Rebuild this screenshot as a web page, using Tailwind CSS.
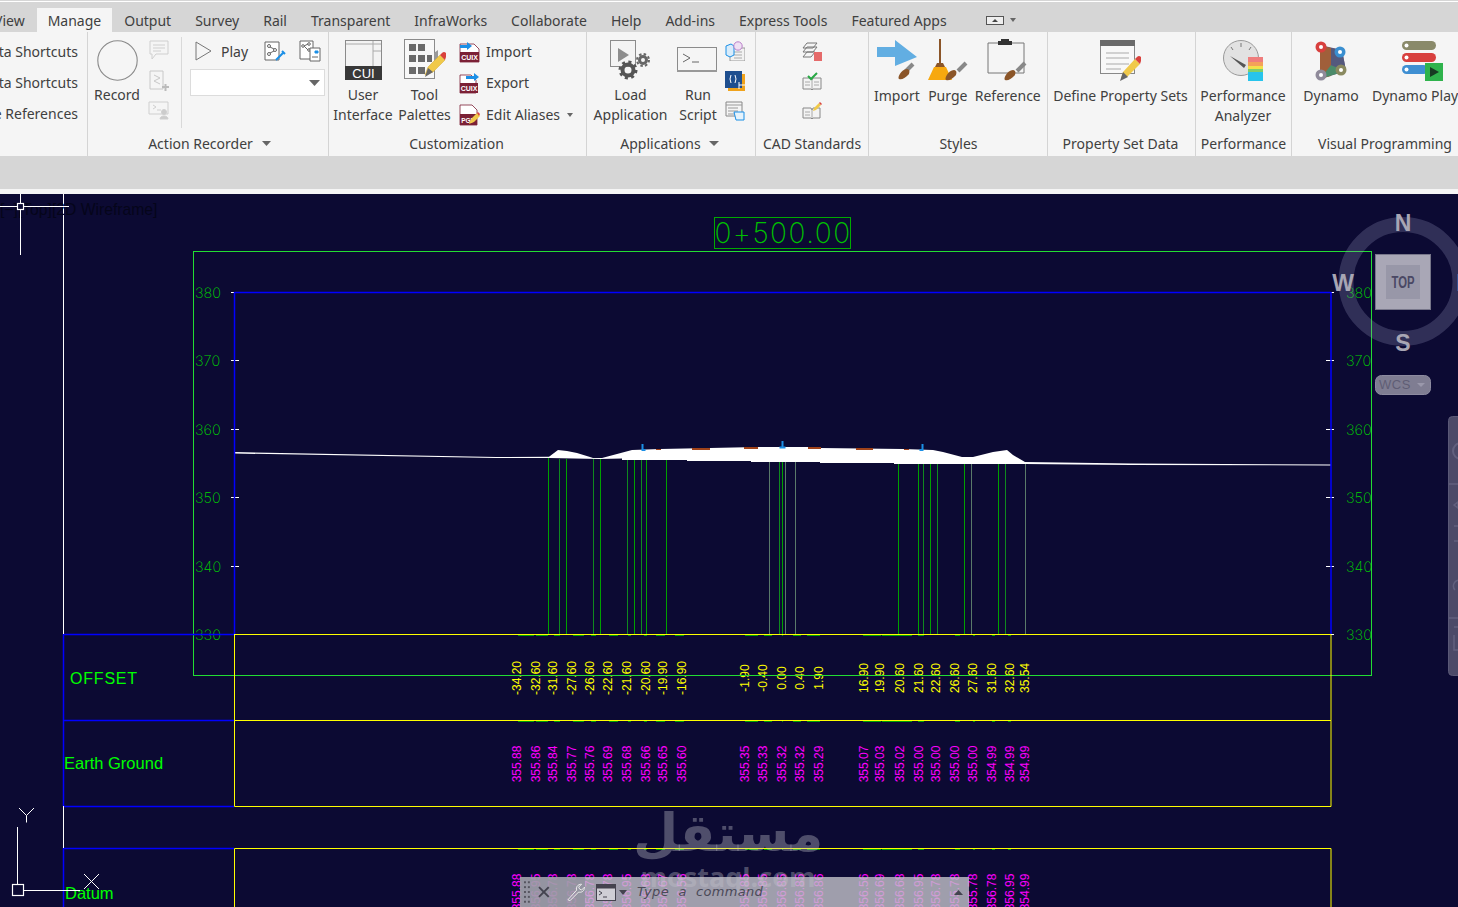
<!DOCTYPE html>
<html lang="en">
<head>
  <meta charset="UTF-8" />
  <title>Civil 3D - Cross Section</title>
  <script src="https://cdn.jsdelivr.net/npm/@tailwindcss/browser@4"></script>
</head>
<body class="relative w-[1458px] h-[907px] overflow-hidden bg-[#d6d6d6] text-[#404040] text-[14px] font-['Noto_Sans',sans-serif]">
  <div class="h-[1px] bg-[#d6d6d6]"></div>
  <div class="h-[1px] bg-white"></div>

  <!-- tabs -->
  <div class="h-[30px] flex items-end -ml-[18px] whitespace-nowrap">
    <div class="h-[24px] px-3 flex items-center">View</div>
    <div class="h-[24px] px-[11px] flex items-center bg-[#f5f5f5]">Manage</div>
    <div class="h-[24px] px-3 flex items-center">Output</div>
    <div class="h-[24px] px-3 flex items-center">Survey</div>
    <div class="h-[24px] px-3 flex items-center">Rail</div>
    <div class="h-[24px] px-3 flex items-center">Transparent</div>
    <div class="h-[24px] px-3 flex items-center">InfraWorks</div>
    <div class="h-[24px] px-3 flex items-center">Collaborate</div>
    <div class="h-[24px] px-3 flex items-center">Help</div>
    <div class="h-[24px] px-3 flex items-center">Add-ins</div>
    <div class="h-[24px] px-3 flex items-center">Express Tools</div>
    <div class="h-[24px] px-3 flex items-center">Featured Apps</div>
    <div class="h-[24px] ml-[27px] flex items-center gap-[6px]">
      <svg width="18" height="9" viewBox="0 0 18 9"><rect x=".5" y=".5" width="17" height="8" fill="#eee" stroke="#555"/><path d="M6 6h6L9 3z" fill="#444"/></svg>
      <svg width="6" height="4" viewBox="0 0 6 4"><path d="M0 0h6L3 4z" fill="#666"/></svg>
    </div>
  </div>

  <!-- ribbon -->
  <div class="h-[124px] flex bg-[#f5f5f5] whitespace-nowrap overflow-hidden">
    <!-- shortcuts -->
    <section class="w-[88px] shrink-0 flex flex-col border-r border-[#d4d4d4] pr-[9px] items-end">
      <div class="flex-1 pt-[4px] flex flex-col items-end leading-[31px]">
        <div>ta Shortcuts</div>
        <div>ta Shortcuts</div>
        <div>e References</div>
      </div>
    </section>

    <!-- action recorder -->
    <section class="w-[241px] shrink-0 flex flex-col border-r border-[#d4d4d4]">
      <div class="flex-1 flex">
        <div class="w-[58px] flex flex-col items-center">
          <div class="h-[52px] flex items-end pb-[3px]"><svg width="41" height="41" viewBox="0 0 41 41"><circle cx="20.5" cy="20.5" r="19.7" fill="#f5f5f5" stroke="#8a8a8a" stroke-width="1.1"/></svg></div>
          <div class="leading-[20px] pt-[1px]">Record</div>
        </div>
        <div class="w-[26px] mr-[9px] pt-[7px] flex flex-col items-center gap-[9px]">
          <svg width="22" height="22" viewBox="0 0 22 22" fill="none" stroke="#cfcfcf"><path d="M2 2h18v13H8l-4 5v-5H2z"/><path d="M5 6h12M5 9h12M5 12h8"/></svg>
          <svg width="22" height="22" viewBox="0 0 22 22" fill="none" stroke="#c8c8c8"><path d="M2 1h13v18H2z"/><path d="M6 5l6 3-6 3 6 3" /><path d="M14 17h7M17.5 14v7" stroke="#bbb" stroke-width="2"/></svg>
          <svg width="22" height="20" viewBox="0 0 22 20" fill="none" stroke="#cfcfcf"><path d="M1 1h19v12H1z"/><path d="M5 4l3 2-3 2M9 9h4"/><circle cx="16" cy="11" r="2.5" fill="#ccc"/><path d="M12 18c0-4 8-4 8 0z" fill="#ccc"/></svg>
        </div>
        <div class="w-[1px] h-[91px] mt-[5px] bg-[#d9d9d9]"></div>
        <div class="pl-[8px] pt-[6px] w-[146px]">
          <div class="h-[26px] flex items-center">
            <svg class="ml-[5px]" width="17" height="20" viewBox="0 0 17 20"><path d="M1 1l15 9-15 9z" fill="none" stroke="#777"/></svg>
            <span class="ml-[9px] w-[43px]">Play</span>
            <svg width="22" height="22" viewBox="0 0 22 22" fill="none" stroke="#666"><path d="M1 2h14v18H1z" fill="#fff"/><circle cx="5" cy="6" r="1.5"/><circle cx="11" cy="10" r="1.5"/><circle cx="5" cy="14" r="1.5"/><path d="M6 7l4 2M10 11l-4 2"/><path d="M12 20l7-7M18 11l3 3" stroke="#1b8fe6" stroke-width="2"/></svg>
            <svg class="ml-[13px]" width="22" height="22" viewBox="0 0 22 22" fill="none" stroke="#666"><path d="M1 1h13v18H1z" fill="#fff"/><circle cx="4" cy="6" r="1.3"/><circle cx="10" cy="4" r="1.3"/><circle cx="10" cy="10" r="1.3"/><path d="M5 6l4-2M5 6l4 4"/><path d="M11 8h10v13H11z" fill="#fff"/><path d="M16 11h3v2h-3z" fill="#1b8fe6" stroke="#1b8fe6"/><path d="M13 17h6"/></svg>
          </div>
          <div class="mt-[5px] w-[135px] h-[27px] bg-white border border-[#dcdcdc] flex items-center justify-end pr-[4px]">
            <svg width="11" height="6" viewBox="0 0 11 6"><path d="M0 0h11L5.5 6z" fill="#666"/></svg>
          </div>
        </div>
      </div>
      <div class="h-[22px] mb-[2px] flex items-center justify-center gap-[9px] pl-[5px] pr-[2px]">Action Recorder <svg width="9" height="5" viewBox="0 0 9 5"><path d="M0 0h9L4.500 5z" fill="#666"/></svg></div>
    </section>

    <!-- customization -->
    <section class="w-[258px] shrink-0 flex flex-col border-r border-[#d4d4d4]">
      <div class="flex-1 flex">
        <div class="w-[70px] flex flex-col items-center -ml-[1px]">
          <div class="h-[52px] flex items-end pb-[4px]">
            <svg width="37" height="40" viewBox="0 0 37 40"><rect x=".5" y=".5" width="36" height="39" fill="#f3f3f3" stroke="#8b8b8b"/><path d="M1 4h35M28 1v26M28 11h8" stroke="#aaa" fill="none"/><rect y="26" width="37" height="14" fill="#383838"/><text x="18.500" y="37.500" text-anchor="middle" fill="#fff" font-size="13" font-family="Liberation Sans">CUI</text></svg>
          </div>
          <div class="leading-[20px] pt-[1px] text-center">User<br>Interface</div>
        </div>
        <div class="w-[59px] flex flex-col items-center -ml-[3px]">
          <div class="h-[52px] flex items-end pb-[3px]">
            <svg width="42" height="42" viewBox="0 0 42 42"><rect x=".5" y=".5" width="30" height="39" fill="#f8f8f8" stroke="#8b8b8b"/><g fill="#6a6a6a"><rect x="5" y="5" width="7" height="7"/><rect x="14" y="5" width="7" height="7"/><rect x="5" y="16" width="7" height="7"/><rect x="14" y="16" width="7" height="7"/><rect x="23" y="16" width="5" height="7"/><rect x="5" y="28" width="7" height="7"/><rect x="14" y="28" width="7" height="7"/></g><path d="M30 14l4-3v10l-4 4z" fill="#999"/><path d="M21 36l3-8 12-12 5 5-12 12z" fill="#f0c94a" stroke="#d5a92e" stroke-width=".5"/><path d="M36 16l2-2a2.500 2.500 0 0 1 4 4l-1 3z" fill="#d9413c"/><path d="M21 38l3-9 5 4z" fill="#666"/></svg>
          </div>
          <div class="leading-[20px] pt-[1px] text-center">Tool<br>Palettes</div>
        </div>
        <div class="flex flex-col pl-[5px] pt-[4px] leading-[31px]">
          <div class="flex items-center gap-[6px]">
            <svg width="21" height="22" viewBox="0 0 21 22"><path d="M1 3h14l5 5v13H1z" fill="#fff" stroke="#7b2035" stroke-width=".8"/><rect x="1" y="11" width="19" height="10" fill="#7b2035"/><text x="10.500" y="19" text-anchor="middle" fill="#fff" font-size="7" font-weight="700" font-family="Liberation Sans">CUIX</text><path d="M1 4h7V1l5 4-5 4V7H1z" fill="#1b8fe6"/></svg>
            Import
          </div>
          <div class="flex items-center gap-[6px]">
            <svg width="21" height="22" viewBox="0 0 21 22"><path d="M1 3h11l5 5v13H1z" fill="#fff" stroke="#7b2035" stroke-width=".8"/><rect x="1" y="11" width="18" height="10" fill="#7b2035"/><text x="10" y="19" text-anchor="middle" fill="#fff" font-size="7" font-weight="700" font-family="Liberation Sans">CUIX</text><path d="M7 4h8V1l5 4-5 4V7H7z" fill="#1b8fe6"/></svg>
            Export
          </div>
          <div class="flex items-center gap-[6px] pt-[1px]">
            <svg width="21" height="22" viewBox="0 0 21 22"><path d="M1 1h12l5 5v15H1z" fill="#fff" stroke="#7b2035" stroke-width=".8"/><rect x="1" y="10" width="17" height="11" fill="#7b2035"/><text x="9" y="18.500" text-anchor="middle" fill="#fff" font-size="6.500" font-weight="700" font-family="Liberation Sans">PGP</text><path d="M10 20l2-5 6-6 3 3-6 6z" fill="#f0c94a"/><path d="M18 9l1-1 2 2-1 2z" fill="#d9413c"/></svg>
            Edit Aliases
            <svg class="ml-[1px]" width="6" height="4" viewBox="0 0 6 4"><path d="M0 0h6L3 4z" fill="#666"/></svg>
          </div>
        </div>
      </div>
      <div class="h-[22px] mb-[2px] flex items-center justify-center pr-[2px]">Customization</div>
    </section>

    <!-- applications -->
    <section class="w-[169px] shrink-0 flex flex-col border-r border-[#d4d4d4]">
      <div class="flex-1 flex">
        <div class="w-[87px] flex flex-col items-center">
          <div class="h-[52px] flex items-end pb-[4px]">
            <svg width="42" height="40" viewBox="0 0 42 40"><rect x=".5" y=".5" width="25" height="26" fill="#f3f3f3" stroke="#8b8b8b"/><path d="M8 8l11 7-11 7z" fill="#8c8c8c"/><circle cx="18" cy="30" r="5.500" fill="none" stroke="#555" stroke-width="4"/><circle cx="18" cy="30" r="8" fill="none" stroke="#555" stroke-width="3" stroke-dasharray="3 3.300"/><circle cx="33" cy="20" r="3.500" fill="none" stroke="#666" stroke-width="3"/><circle cx="33" cy="20" r="6" fill="none" stroke="#666" stroke-width="2" stroke-dasharray="2.500 2.200"/></svg>
          </div>
          <div class="leading-[20px] pt-[1px] text-center">Load<br>Application</div>
        </div>
        <div class="w-[48px] flex flex-col items-center">
          <div class="h-[52px] flex items-end pb-[11px] -ml-[2px]">
            <svg width="40" height="26" viewBox="0 0 40 26"><rect x=".5" y=".5" width="39" height="24" fill="#f5f5f5" stroke="#8b8b8b"/><rect y="23" width="40" height="2" fill="#999"/><path d="M6 7l7 4-7 4M15 15h7" fill="none" stroke="#666"/></svg>
          </div>
          <div class="leading-[20px] pt-[1px] text-center">Run<br>Script</div>
        </div>
        <div class="pl-[3px] pt-[9px] flex flex-col gap-[10px]">
          <svg width="20" height="20" viewBox="0 0 20 20"><path d="M5 7h15v13H5z" fill="#f2f2f2" stroke="#999"/><path d="M9 11h8M9 14h8M9 17h8" stroke="#aaa"/><path d="M1 5l5-2 3 2v9l-4 2-4-2z" fill="#d8ecfb" stroke="#1b8fe6"/><circle cx="13" cy="5" r="4.200" fill="#efe0f3" stroke="#b97fc9"/></svg>
          <svg width="20" height="20" viewBox="0 0 20 20"><rect x="3" y="3" width="17" height="17" fill="#f0a31c"/><rect width="17" height="17" fill="#1f4f8f"/><path d="M6 4q-2 4 0 8M10 4q2 4 0 8" fill="none" stroke="#fff"/><path d="M14 14h6M14 11v7" stroke="#fff"/></svg>
          <svg width="20" height="20" viewBox="0 0 20 20"><path d="M1 1h16v14H1z" fill="#f5f5f5" stroke="#888"/><path d="M1 4h16M3 7h10M3 10h10M3 13h6" stroke="#999"/><path d="M9 11h10v8H11z" fill="#e6f3fc" stroke="#1b8fe6"/></svg>
        </div>
      </div>
      <div class="h-[22px] mb-[2px] flex items-center justify-center gap-[8px] pr-[3px]">Applications <svg width="10" height="5" viewBox="0 0 10 5"><path d="M0 0h10L5 5z" fill="#666"/></svg></div>
    </section>

    <!-- cad standards -->
    <section class="w-[113px] shrink-0 flex flex-col border-r border-[#d4d4d4]">
      <div class="flex-1 flex flex-col items-center pt-[10px] gap-[10px] pr-[1px]">
        <svg width="20" height="20" viewBox="0 0 20 20" fill="none" stroke="#777"><path d="M5 1h10l-4 5H1zM5 5h10l-4 5H1zM5 10h8l-4 5H1z" fill="#f5f5f5"/><rect x="12" y="10" width="8" height="9" fill="#e56a6a" stroke="none"/></svg>
        <svg width="20" height="19" viewBox="0 0 20 19"><path d="M1 6h8l1 2 1-2h8v11h-8l-1 1-1-1H1z" fill="#f3f3f3" stroke="#888"/><path d="M10 8v9M3 10h5M3 13h5M12 10h5M12 13h5" stroke="#aaa"/><path d="M6 4l3 3 6-6" fill="none" stroke="#27a844" stroke-width="2"/></svg>
        <svg width="20" height="20" viewBox="0 0 20 20"><path d="M1 7h8l1 2 1-2h7v10h-7l-1 1-1-1H1z" fill="#f3f3f3" stroke="#888"/><path d="M10 9v8M3 11h5M3 14h5" stroke="#aaa"/><path d="M11 10l1-3 5-5 2 2-5 5z" fill="#f0c94a"/><path d="M17 2l1-1 2 2-1 1z" fill="#d9413c"/></svg>
      </div>
      <div class="h-[22px] mb-[2px] flex items-center justify-center">CAD Standards</div>
    </section>

    <!-- styles -->
    <section class="w-[179px] shrink-0 flex flex-col border-r border-[#d4d4d4]">
      <div class="flex-1 flex pl-[5px] gap-[8px]">
        <div class="flex flex-col items-center">
          <div class="h-[52px] flex items-end pb-[3px]">
            <svg width="42" height="42" viewBox="0 0 42 42"><path d="M1 8h18V1l22 17-22 9v-9H1z" fill="#62aee2"/><path d="M37 25l-8 8" stroke="#888" stroke-width="4"/><path d="M23 40c-2-1 2-10 8-10 3 0 3 4 1 6-3 3-6 5-9 4z" fill="#8b5528"/></svg>
          </div>
          <div class="leading-[20px] pt-[2px]">Import</div>
        </div>
        <div class="flex flex-col items-center">
          <div class="h-[52px] flex items-end pb-[3px]">
            <svg width="40" height="42" viewBox="0 0 40 42"><path d="M11 0h2v24h-2z" fill="#8b5528"/><path d="M9 24h6l3 6H6z" fill="#8b5528"/><path d="M6 28h12l6 13H0z" fill="#f7a80f"/><path d="M38 24l-8 8" stroke="#888" stroke-width="4"/><path d="M18 41c-2-1 2-10 8-10 3 0 3 4 1 6-3 3-6 5-9 4z" fill="#8b5528"/></svg>
          </div>
          <div class="leading-[20px] pt-[2px]">Purge</div>
        </div>
        <div class="flex flex-col items-center -ml-[1px]">
          <div class="h-[52px] flex items-end pb-[3px]">
            <svg width="42" height="42" viewBox="0 0 42 42"><path d="M1 4h36v30H1z" fill="#f5f5f5" stroke="#777"/><path d="M11 4V2h3V0h8v2h3v4H11z" fill="#333"/><path d="M38 24l-8 8" stroke="#888" stroke-width="4"/><path d="M18 41c-2-1 2-10 8-10 3 0 3 4 1 6-3 3-6 5-9 4z" fill="#8b5528"/></svg>
          </div>
          <div class="leading-[20px] pt-[2px]">Reference</div>
        </div>
      </div>
      <div class="h-[22px] mb-[2px] flex items-center justify-center pl-[1px]">Styles</div>
    </section>

    <!-- property set data -->
    <section class="w-[148px] shrink-0 flex flex-col border-r border-[#d4d4d4]">
      <div class="flex-1 flex flex-col items-center pr-[2px]">
        <div class="h-[52px] flex items-end pb-[3px]">
          <svg width="41" height="41" viewBox="0 0 41 41"><rect x=".5" y=".5" width="34" height="33" fill="#f8f8f8" stroke="#888"/><rect width="35" height="6" fill="#6a6a6a"/><path d="M6 13h23M6 18h23M6 24h23M6 29h15" stroke="#aaa"/><path d="M21 38l2-6 12-13 5 5-13 13z" fill="#f0c94a"/><path d="M35 19l2-2a2.500 2.500 0 0 1 4 4l-1 3z" fill="#d9413c"/><path d="M20 41l3-9 5 5z" fill="#666"/></svg>
        </div>
        <div class="leading-[20px] pt-[2px]">Define Property Sets</div>
      </div>
      <div class="h-[22px] mb-[2px] flex items-center justify-center pr-[2px]">Property Set Data</div>
    </section>

    <!-- performance -->
    <section class="w-[96px] shrink-0 flex flex-col border-r border-[#d4d4d4]">
      <div class="flex-1 flex flex-col items-center pr-[1px]">
        <div class="h-[52px] flex items-end pb-[3px]">
          <svg width="41" height="41" viewBox="0 0 41 41"><circle cx="18" cy="18" r="17.500" fill="#e2e2e2" stroke="#999"/><path d="M18 3v4M8 7l2 3M28 7l-2 3" stroke="#777"/><path d="M7 16l14 12 2-3z" fill="#555"/><rect x="25" y="17" width="15" height="8" fill="#ef7d7d"/><rect x="25" y="22" width="15" height="4" fill="#f4a259"/><rect x="25" y="26" width="15" height="4" fill="#f3e04a"/><rect x="25" y="29" width="15" height="3" fill="#7fcf6a"/><rect x="25" y="32" width="15" height="9" fill="#27c4ec"/></svg>
        </div>
        <div class="leading-[20px] pt-[2px] text-center">Performance<br>Analyzer</div>
      </div>
      <div class="h-[22px] mb-[2px] flex items-center justify-center">Performance</div>
    </section>

    <!-- visual programming -->
    <section class="flex-1 min-w-0 flex flex-col overflow-hidden">
      <div class="flex-1 flex">
        <div class="w-[80px] shrink-0 pr-[2px] flex flex-col items-center">
          <div class="h-[52px] flex items-end pb-[3px]">
            <svg width="32" height="40" viewBox="0 0 32 40"><path d="M5 4l22 5 4 21-26 8z" fill="#6a5a7a"/><path d="M5 4l11 3v28l-11 3z" fill="#a05f3a"/><path d="M16 24l15 6-26 8z" fill="#4b8b6a"/><path d="M16 7l11 2 4 21-15-6z" fill="#54597d"/><circle cx="6" cy="6" r="5.500" fill="#d8403e"/><circle cx="6" cy="6" r="2" fill="#fff"/><circle cx="25" cy="11" r="5.500" fill="#3a8fd0"/><circle cx="25" cy="11" r="2" fill="#fff"/><circle cx="26" cy="29" r="5.500" fill="#8a8a60"/><circle cx="26" cy="29" r="2" fill="#fff"/><circle cx="6" cy="34" r="5.500" fill="#8f8a9a"/><circle cx="6" cy="34" r="2" fill="#fff"/></svg>
          </div>
          <div class="leading-[20px] pt-[2px]">Dynamo</div>
        </div>
        <div class="shrink-0 flex flex-col items-start">
          <div class="h-[52px] flex items-end pb-[3px] pl-[30px]">
            <svg width="41" height="40" viewBox="0 0 41 40"><rect y="0" width="34" height="9" rx="4.500" fill="#8a8a6a"/><circle cx="4.500" cy="4.500" r="2" fill="#fff"/><rect y="12" width="34" height="9" rx="4.500" fill="#d8403e"/><circle cx="4.500" cy="16.500" r="2" fill="#fff"/><rect y="24" width="26" height="9" rx="4.500" fill="#3f8fd2"/><circle cx="4.500" cy="28.500" r="2" fill="#fff"/><rect x="23" y="22" width="18" height="18" fill="#2fb34c"/><path d="M28 26l9 5-9 5z" fill="#173b22"/></svg>
          </div>
          <div class="leading-[20px] pt-[2px]">Dynamo Player</div>
        </div>
      </div>
      <div class="h-[22px] mb-[2px] flex items-center pl-[26px]">Visual Programming</div>
    </section>
  </div>

  <div class="h-[33px] bg-[#d6d6d6]"></div>
  <div class="h-[5px] bg-[#f5f5f5]"></div>

  <!-- drawing area -->
  <div class="h-[713px] bg-[#0c0a33]">
    <svg id="sheet" width="1458" height="713" viewBox="0 194 1458 713" class="block">
      <!-- ground -->
      <polygon fill="#fff" points="234,452 496,457 549,456.700 558,450 567,451 577,453 590,457 593,458 602,458 617,454 632,450 660,449 710,448 757,447 820,447 820,448 903,449 933,450 943,452 962,457 973,457 993,452 1007,450 1013,455 1025,462 1131,463.500 1331,464.500 1331,465.500 1131,465 1025,464 894,464 894,463 820,463 820,462 751,462 751,461 687,461 687,460 622,460 622,458.500 600,459 549,458 496,458 234,453.500" />
      <g id="chart"></g>

      <!-- layout lines -->
      <rect x="193.500" y="251.500" width="1178" height="424" fill="none" stroke="#22dd33" />
      <rect x="714.500" y="217.500" width="136" height="31" fill="none" stroke="#00aa00" />
      <text x="783" y="243" text-anchor="middle" fill="#00c000" font-family="Inter" font-weight="200" font-size="28" letter-spacing="1.500">0+500.00</text>

      <path d="M234.500 292.500H1331M234.500 292v342M1331 292v342" fill="none" stroke="#0000ff" stroke-width="1.500" />
      <path d="M63.500 634.500H234M63.500 720.500H234M63.500 806.500H234M63.500 848.500H234M63.500 634v172M63.500 848v59" fill="none" stroke="#0000ff" stroke-width="1.500" />
      <path d="M63.500 194v440M63.500 806v42" fill="none" stroke="#fff" />
      <path d="M234.500 634.500H1331V720.500H234.500ZM234.500 720.500H1331V806.500H234.500ZM234.500 907V848.500H1331V907" fill="none" stroke="#ffff00" />

      <text x="70" y="684" fill="#00ff00" font-family="Liberation Sans" font-size="16" letter-spacing=".8">OFFSET</text>
      <text x="64" y="769" fill="#00ff00" font-family="Liberation Sans" font-size="16.500">Earth Ground</text>
      <text x="65" y="899" fill="#00ff00" font-family="Liberation Sans" font-size="16.500">Datum</text>

      <!-- viewport label and crosshair -->
      <text x="0" y="215" fill="#05051a" font-family="Liberation Sans" font-size="15.700">[−][Top][2D Wireframe]</text>
      <path d="M20.500 194v61M0 206.500h69" stroke="#fff" fill="none" />
      <rect x="17.500" y="203.500" width="6" height="6" fill="#0c0a33" stroke="#fff" stroke-width="1.200" />

      <!-- ucs icon -->
      <path d="M17.500 827v57M24 890.500h56M19 808l7.500 7.500L34 808M26.500 815.500v7M84 874l15 15M99 874l-15 15" stroke="#fff" fill="none" />
      <rect x="12.500" y="884.500" width="11" height="11" fill="none" stroke="#fff" stroke-width="1.200" />

      <!-- view cube -->
      <circle cx="1403" cy="281.500" r="57" fill="none" stroke="#9c9bc0" stroke-opacity=".26" stroke-width="15" />
      <g fill="#a8a6b4" font-family="Liberation Sans" font-weight="700" font-size="23" text-anchor="middle">
        <text x="1403" y="231">N</text>
        <text x="1403" y="351">S</text>
        <text x="1343" y="291">W</text>
        <text x="1464" y="291">E</text>
      </g>
      <rect x="1375.500" y="254.500" width="55" height="55" fill="#a9a7b6" stroke="#77768a" />
      <rect x="1386" y="265" width="34" height="34" fill="#9897a8" />
      <text x="1403" y="288" text-anchor="middle" fill="#4a4864" font-family="Liberation Sans" font-weight="700" font-size="16" textLength="23" lengthAdjust="spacingAndGlyphs">TOP</text>
      <rect x="1375.500" y="375.500" width="55" height="19" rx="6" fill="#7f7d92" stroke="#8d8ba0" />
      <text x="1379" y="389" fill="#5f5d75" font-family="Liberation Sans" font-size="13" letter-spacing=".5">WCS</text>
      <path d="M1417 383h8l-4 4z" fill="#9a98ab" />

      <!-- navigation bar -->
      <rect x="1448.500" y="416.500" width="20" height="259" rx="4" fill="#4c4a68" stroke="#5a5876" />
      <circle cx="1461" cy="451" r="8" fill="none" stroke="#62607e" stroke-width="2" />
      <path d="M1449 484h10M1454 505l4 -3v6zM1454 526h4M1454 541h4M1449 618h10M1454 627h5M1454 635v15h5" stroke="#62607e" fill="none" stroke-width="1.500" />
      <path d="M1455 590a6 6 0 0 1 4 -10" stroke="#62607e" fill="none" stroke-width="1.500" />

      <!-- watermark -->
      <g fill="#c8c8d0" fill-opacity=".36" text-anchor="middle" font-weight="700">
        <text x="728" y="851" font-family="DejaVu Sans" font-size="52" direction="rtl">مستقل</text>
        <text x="728" y="887" font-family="Open Sans" font-size="27">mostaql.com</text>
      </g>
    </svg>
  </div>

  <!-- command line -->
  <div class="absolute left-[520px] top-[877px] w-[449px] h-[30px] bg-[#c4c3cb]/80 flex items-center text-[#4b4a58]">
    <div class="w-[65px] h-full bg-[#8e8d9a]/60 flex items-center pl-[4px] gap-[8px]">
      <svg width="6" height="22" viewBox="0 0 6 22" fill="#55545f"><rect width="2" height="2"/><rect x="4" width="2" height="2"/><rect y="5" width="2" height="2"/><rect x="4" y="5" width="2" height="2"/><rect y="10" width="2" height="2"/><rect x="4" y="10" width="2" height="2"/><rect y="15" width="2" height="2"/><rect x="4" y="15" width="2" height="2"/><rect y="20" width="2" height="2"/><rect x="4" y="20" width="2" height="2"/></svg>
      <svg width="12" height="12" viewBox="0 0 12 12"><path d="M1 1l10 10M11 1L1 11" stroke="#44434f" stroke-width="2"/></svg>
      <svg class="ml-[8px]" width="20" height="20" viewBox="0 0 20 20" fill="none" stroke="#eee"><path d="M2 18l9-10c-1-3 1-6 5-6l-3 3 1 2 2 1 3-3c0 4-3 6-6 5L4 19z"/></svg>
    </div>
    <svg class="ml-[11px]" width="20" height="17" viewBox="0 0 20 17" fill="none" stroke="#44434f"><rect x=".5" y=".5" width="19" height="16" fill="#cfced5"/><rect y="0" width="20" height="4" fill="#44434f"/><path d="M3 7l3 2-3 2M7 13h4"/></svg>
    <svg class="ml-[3px]" width="8" height="5" viewBox="0 0 8 5"><path d="M0 0h8L4 5z" fill="#44434f"/></svg>
    <span class="ml-[10px] italic text-[13px] tracking-[.3px] [word-spacing:5px] font-['DejaVu_Sans',sans-serif]">Type a command</span>
    <svg class="ml-auto mr-[6px]" width="9" height="5" viewBox="0 0 9 5"><path d="M0 5h9L4.500 0z" fill="#44434f"/></svg>
  </div>

  <script>
    // section data drawn into the svg
    const NS = 'http://www.w3.org/2000/svg';
    const chart = document.getElementById('chart');
    const add = (tag, attrs, text) => {
      const el = document.createElementNS(NS, tag);
      Object.entries(attrs).forEach(([k, v]) => el.setAttribute(k, v));
      if (text) el.textContent = text;
      chart.appendChild(el);
    };

    // elevation axis
    [[380, 292.5], [370, 360.5], [360, 429.5], [350, 497.5], [340, 566.5], [330, 634.5]].forEach(([v, y]) => {
      add('path', { d: `M231 ${y}h8M1326 ${y}h8`, stroke: '#fff', fill: 'none' });
      ['195', '1346'].forEach(x => add('text', {
        x, y: y + 5, fill: '#00d400', 'font-family': 'Inter', 'font-weight': 200, 'font-size': 14.5
      }, String(v)));
    });

    // verticals from ground down to the datum line
    const dim = '#0f8a1f', strong = '#00a000', grey = '#5a7a6a';
    [[548.5, 458, strong], [559.5, 459, dim], [566.5, 459, strong], [593.5, 459, dim], [600.5, 459, strong],
     [627.5, 460, dim], [634.5, 460, strong], [641.5, 460, dim], [646.5, 460, strong], [666.5, 460, strong],
     [769.5, 462, grey], [779.5, 462, dim], [782.5, 462, strong], [785.5, 462, grey], [795.5, 462, grey],
     [898.5, 464, strong], [918.5, 464, strong], [923.5, 464, dim], [930.5, 464, strong], [937.5, 464, dim],
     [964.5, 464, strong], [971.5, 464, grey], [998.5, 464, strong], [1005.5, 464, dim], [1025.5, 464, grey]
    ].forEach(([x, y, c]) => add('path', { d: `M${x} ${y}V635`, stroke: c }));

    // brown paving patches
    [[692, 448, 18, 2], [744, 447, 14, 2], [808, 447, 13, 2], [856, 448, 17, 2], [904, 449, 5, 1], [656, 449, 5, 1]]
      .forEach(([x, y, width, height]) => add('rect', { x, y, width, height, fill: '#a0431a' }));

    // blue markers
    add('path', { d: 'M642.500 444v6h3M782.500 441v6M779.500 447.500h6M922.500 444v6h-3', stroke: '#1b8fe6', fill: 'none', 'stroke-width': 2 });

    // green dashes along the band lines
    const dashes = [[518, 534], [536, 548], [554, 560], [573, 584], [591, 596], [609, 618], [628, 631], [644, 647], [656, 665], [675, 684],
      [745, 758], [764, 772], [782, 783], [793, 801], [807, 820], [863, 881], [882, 912], [918, 924], [955, 960], [973, 975], [992, 995], [1008, 1011]];
    [635, 721, 849].forEach(y => {
      dashes.forEach(([a, b]) => add('path', { d: `M${a} ${y}H${b}`, stroke: '#00a000', 'stroke-width': 2 }));
    });

    // offset and elevation bands
    const xs = [517, 536, 553, 572, 590, 608, 627, 646, 663, 682, 744.500, 763, 782, 799.500, 819, 863.500, 880, 900, 918.500, 936, 955, 972.500, 992, 1009.500, 1024.500];
    const offsets = ['-34.20', '-32.60', '-31.60', '-27.60', '-26.60', '-22.60', '-21.60', '-20.60', '-19.90', '-16.90', '-1.90', '-0.40', '0.00', '0.40', '1.90', '16.90', '19.90', '20.60', '21.60', '22.60', '26.60', '27.60', '31.60', '32.60', '35.54'];
    const ground = ['355.88', '355.86', '355.84', '355.77', '355.76', '355.69', '355.68', '355.66', '355.65', '355.60', '355.35', '355.33', '355.32', '355.32', '355.29', '355.07', '355.03', '355.02', '355.00', '355.00', '355.00', '355.00', '354.99', '354.99', '354.99'];
    const datum = ['355.88', '356.95', '356.78', '356.78', '356.78', '356.78', '356.95', '356.68', '356.67', '356.56', '356.85', '356.85', '356.85', '356.85', '356.86', '356.56', '356.69', '356.68', '356.95', '356.78', '355.78', '355.78', '356.78', '356.95', '354.99'];
    const band = (values, y, fill) => values.forEach((v, i) => add('text', {
      transform: `translate(${xs[i] + 4} ${y}) rotate(-90)`, fill, 'text-anchor': 'middle',
      'font-family': 'Liberation Sans', 'font-size': 12
    }, v));
    band(offsets, 678, '#ffff00');
    band(ground, 764, '#ff00ff');
    band(datum, 892, '#ff00ff');
  </script>
</body>
</html>
